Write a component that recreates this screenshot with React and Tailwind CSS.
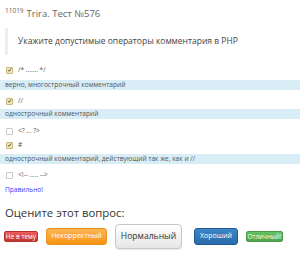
export default function App() {
  const Check = ({ checked }) =>
    checked ? (
      <span className="flex h-[7px] w-[7px] items-center justify-center rounded-[1px] border border-[#c9b77c] bg-[#f3e6bd]">
        <svg viewBox="0 0 8 8" className="h-[6px] w-[6px]">
          <path d="M1.5 4.2 L3.3 6 L6.6 1.6" fill="none" stroke="#333" strokeWidth="1.3" />
        </svg>
      </span>
    ) : (
      <span className="block h-[7px] w-[7px] rounded-[1px] border border-[#c8c8c8] bg-white"></span>
    );

  const Row = ({ checked, label, className }) => (
    <div className={"flex h-[10px] items-center " + className}>
      <span className="ml-[1px] block">
        <Check checked={checked} />
      </span>
      <span className="ml-[5px] text-[6.6px] text-[#555]">{label}</span>
    </div>
  );

  const Note = ({ text, className }) => (
    <div className={"-mx-[5px] flex h-[10px] items-center bg-[#d9edf7] px-[5px] text-[6.6px] text-[#555] " + className}>
      {text}
    </div>
  );

  return (
    <div
      className="h-[271px] w-[300px] overflow-hidden bg-white px-[5px] pt-[6px] text-[#555]"
      style={{ fontFamily: '"Open Sans", "Noto Sans", sans-serif' }}
    >
      <div className="flex h-[16px] items-center text-[#666]">
        <span className="relative -top-[3px] text-[6.5px]">11019</span>
        <span className="ml-[3px] text-[9.5px]">Trira. Тест №576</span>
      </div>

      <div className="mt-[6px] flex h-[27px] items-center border-l-[3px] border-[#eee] pl-[10px] text-[8.5px] text-[#444]">
        Укажите допустимые операторы комментария в PHP
      </div>

      <Row checked label="/* ....... */" className="mt-[10px]" />
      <Note text="верно, многострочный комментарий" className="mt-[5px]" />
      <Row checked label="//" className="mt-[6px]" />
      <Note text="однострочный комментарий" className="mt-[3px]" />
      <Row label="<? ... ?>" className="mt-[7px]" />
      <Row checked label="#" className="mt-[4px]" />
      <Note text="однострочный комментарий, действующий так же, как и //" className="mt-[4px]" />
      <Row label="<!-- ..... -->" className="mt-[6px]" />

      <div className="mt-[5px] flex h-[10px] items-center text-[6.6px] text-[#3b3bf5]">Правильно!</div>

      <div className="mt-[10px] flex h-[16px] items-center text-[11.3px] text-[#333]">Оцените этот вопрос:</div>

      <div className="mt-[3px] flex h-[25px] items-center">
        <button className="-ml-[1px] flex h-[11px] w-[34px] items-center justify-center rounded-[2px] border border-[#b5332c] bg-gradient-to-b from-[#ee5f5b] to-[#bd362f] text-[6.5px] text-white">
          Не в тему
        </button>
        <button className="ml-[8px] flex h-[17px] w-[61px] items-center justify-center rounded-[3px] border border-[#e6921f] bg-gradient-to-b from-[#fbb450] to-[#f89406] text-[7px] text-white">
          Некорректный
        </button>
        <button className="ml-[8px] flex h-[25px] w-[67px] items-center justify-center rounded-[4px] border border-[#c8c8c8] bg-gradient-to-b from-white to-[#e6e6e6] text-[8.6px] text-[#333] shadow-[0_1px_1px_rgba(0,0,0,0.08)]">
          Нормальный
        </button>
        <button className="ml-[12px] flex h-[17px] w-[44px] items-center justify-center rounded-[3px] border border-[#1f5a96] bg-gradient-to-b from-[#3c86c6] to-[#2a6bab] text-[7px] text-white">
          Хороший
        </button>
        <button className="ml-[8px] flex h-[11px] w-[37px] items-center justify-center rounded-[2px] border border-[#4a9a4a] bg-gradient-to-b from-[#62c462] to-[#51a351] text-[6.3px] text-white">
          Отличный!
        </button>
      </div>
    </div>
  );
}
